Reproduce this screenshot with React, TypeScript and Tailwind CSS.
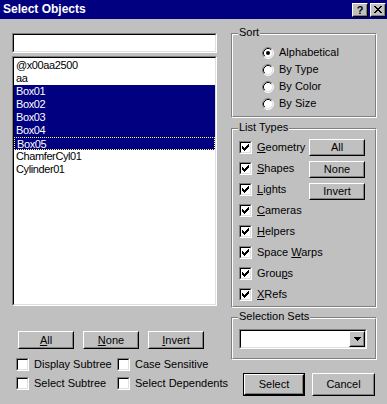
import { type ReactNode } from "react";

const CHECK_PIXELS: [number, number][] = [
  [6, 0],
  [5, 1], [6, 1],
  [0, 2], [4, 2], [5, 2], [6, 2],
  [0, 3], [1, 3], [3, 3], [4, 3], [5, 3],
  [0, 4], [1, 4], [2, 4], [3, 4], [4, 4],
  [1, 5], [2, 5], [3, 5],
  [2, 6],
];

function Sunken({ className = "", children }: { className?: string; children?: ReactNode }) {
  return (
    <div className={`border border-t-[#808080] border-l-[#808080] border-b-white border-r-white ${className}`}>
      <div className="h-full w-full border border-t-black border-l-black border-b-[#dfdfdf] border-r-[#dfdfdf] bg-white">
        {children}
      </div>
    </div>
  );
}

function Button({
  children,
  className = "",
  isDefault,
}: {
  children: ReactNode;
  className?: string;
  isDefault?: boolean;
}) {
  const face = (
    <div className="h-full w-full border border-t-white border-l-white border-b-black border-r-black bg-[#c0c0c0]">
      <div className="flex h-full w-full items-center justify-center border border-t-[#c0c0c0] border-l-[#c0c0c0] border-b-[#808080] border-r-[#808080]">
        {children}
      </div>
    </div>
  );
  if (isDefault) return <div className={`border border-black ${className}`}>{face}</div>;
  return <div className={className}>{face}</div>;
}

function CheckBox({ checked }: { checked?: boolean }) {
  return (
    <Sunken className="h-[13px] w-[13px] shrink-0">
      {checked && (
        <svg width="9" height="9" viewBox="0 0 9 9" shapeRendering="crispEdges">
          {CHECK_PIXELS.map(([x, y]) => (
            <rect key={`${x}-${y}`} x={x + 1} y={y + 1} width="1" height="1" fill="#000" />
          ))}
        </svg>
      )}
    </Sunken>
  );
}

function Radio({ checked }: { checked?: boolean }) {
  return (
    <svg width="12" height="12" viewBox="0 0 12 12" className="shrink-0">
      <circle cx="6" cy="6" r="5" fill="#fff" />
      <path d="M2.11 9.89 A5.5 5.5 0 0 1 9.89 2.11" stroke="#808080" fill="none" />
      <path d="M9.89 2.11 A5.5 5.5 0 0 1 2.11 9.89" stroke="#fff" fill="none" />
      <path d="M2.82 9.18 A4.5 4.5 0 0 1 9.18 2.82" stroke="#000" fill="none" />
      <path d="M9.18 2.82 A4.5 4.5 0 0 1 2.82 9.18" stroke="#dfdfdf" fill="none" />
      {checked && <circle cx="6" cy="6" r="2" fill="#000" />}
    </svg>
  );
}

function Group({
  label,
  className = "",
  children,
}: {
  label: string;
  className?: string;
  children: ReactNode;
}) {
  return (
    <div className={`relative border border-t-[#808080] border-l-[#808080] border-b-white border-r-white ${className}`}>
      <div className="h-full w-full border border-t-white border-l-white border-b-[#808080] border-r-[#808080]">
        {children}
      </div>
      <span className="absolute -top-[8px] left-[6px] bg-[#c0c0c0] px-[1px] leading-[13px]">{label}</span>
    </div>
  );
}

const u = (s: string) => <span className="underline underline-offset-[1px]">{s}</span>;

const objects = [
  { name: "@x00aa2500" },
  { name: "aa" },
  { name: "Box01", sel: true },
  { name: "Box02", sel: true },
  { name: "Box03", sel: true },
  { name: "Box04", sel: true },
  { name: "Box05", sel: true, focus: true },
  { name: "ChamferCyl01" },
  { name: "Cylinder01" },
];

const sorts = ["Alphabetical", "By Type", "By Color", "By Size"];

const types: ReactNode[] = [
  <>{u("G")}eometry</>,
  <>{u("S")}hapes</>,
  <>{u("L")}ights</>,
  <>{u("C")}ameras</>,
  <>{u("H")}elpers</>,
  <>Space {u("W")}arps</>,
  <>Grou{u("p")}s</>,
  <>{u("X")}Refs</>,
];

export default function App() {
  return (
    <div className="h-[404px] w-[387px] overflow-hidden bg-[#c0c0c0] font-['Liberation_Sans',Arial,sans-serif] text-[11px] leading-[13px] text-black">
      <div className="flex h-[19px] items-center bg-[#000080] pl-[3px] pr-[1px]">
        <span className="text-[12px] font-bold text-white">Select Objects</span>
        <div className="ml-auto flex gap-[2px]">
          <Button className="h-[14px] w-[16px]">
            <span className="text-[11px] font-bold leading-[10px]">?</span>
          </Button>
          <Button className="h-[14px] w-[16px]">
            <svg width="8" height="7" viewBox="0 0 8 7" shapeRendering="crispEdges">
              <path d="M0 0h2l2 2.5 2-2.5h2L5 3.5 8 7H6L4 4.5 2 7H0l3-3.5z" fill="#000" />
            </svg>
          </Button>
        </div>
      </div>

      <div className="flex pl-[12px] pt-[14px]">
        <div className="flex w-[205px] flex-col">
          <Sunken className="h-[20px]" />
          <Sunken className="mt-[3px] h-[250px]">
            <div className="flex flex-col pt-[1px] tracking-[-0.4px]">
              {objects.map((o) => (
                <div
                  key={o.name}
                  className={`h-[13px] pl-[2px] leading-[12px] ${o.sel ? "bg-[#000080] text-white" : ""} ${
                    o.focus ? "border border-dotted border-[#ffff80] pl-[1px]" : ""
                  }`}
                >
                  {o.name}
                </div>
              ))}
            </div>
          </Sunken>
          <div className="mt-[25px] flex gap-[9px] pl-[6px]">
            <Button className="h-[18px] w-[56px]">{u("A")}ll</Button>
            <Button className="h-[18px] w-[56px]">{u("N")}one</Button>
            <Button className="h-[18px] w-[56px]">{u("I")}nvert</Button>
          </div>
          <div className="mt-[9px] grid grid-cols-[101px_1fr] gap-y-[6px] pl-[4px]">
            {["Display Subtree", "Case Sensitive", "Select Subtree", "Select Dependents"].map((t) => (
              <div key={t} className="flex items-center gap-[5px]">
                <CheckBox />
                <span className="whitespace-nowrap">{t}</span>
              </div>
            ))}
          </div>
        </div>

        <div className="ml-[14px] flex w-[146px] flex-col">
          <Group label="Sort" className="h-[85px]">
            <div className="flex flex-col pl-[29px] pt-[9px]">
              {sorts.map((s, i) => (
                <div key={s} className="flex h-[17px] items-center gap-[5px]">
                  <Radio checked={i === 0} />
                  <span>{s}</span>
                </div>
              ))}
            </div>
          </Group>

          <Group label="List Types" className="mt-[10px] h-[180px]">
            <div className="flex pl-[6px] pr-[10px] pt-[7px]">
              <div className="flex w-[70px] shrink-0 flex-col">
                {types.map((t, i) => (
                  <div key={i} className="flex h-[21px] items-center gap-[5px] whitespace-nowrap">
                    <CheckBox checked />
                    <span>{t}</span>
                  </div>
                ))}
              </div>
              <div className="ml-auto flex flex-col gap-[5px] pt-[2px]">
                <Button className="h-[17px] w-[56px]">All</Button>
                <Button className="h-[17px] w-[56px]">None</Button>
                <Button className="h-[17px] w-[56px]">Invert</Button>
              </div>
            </div>
          </Group>

          <Group label="Selection Sets" className="mt-[9px] h-[43px]">
            <div className="pl-[6px] pr-[8px] pt-[10px]">
              <Sunken className="h-[20px]">
                <div className="flex h-full justify-end">
                  <Button className="h-[16px] w-[16px]">
                    <svg width="7" height="4" viewBox="0 0 7 4" shapeRendering="crispEdges">
                      <path d="M0 0h7L3.5 4z" fill="#000" />
                    </svg>
                  </Button>
                </div>
              </Sunken>
            </div>
          </Group>

          <div className="mt-[13px] flex gap-[7px] pl-[12px]">
            <Button isDefault className="h-[23px] w-[62px]">Select</Button>
            <Button className="h-[23px] w-[63px]">Cancel</Button>
          </div>
        </div>
      </div>
    </div>
  );
}
